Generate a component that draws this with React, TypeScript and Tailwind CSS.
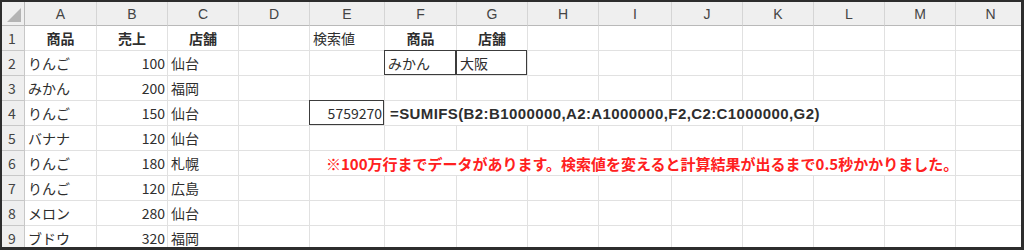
import React from 'react'
import clsx from 'clsx'

// column widths of the sheet, first entry is the row-number gutter
const colWidths = [23, 72, 71, 71, 71, 75, 72, 71, 71, 73, 71, 71, 71, 71, 70]
const letters = ['A', 'B', 'C', 'D', 'E', 'F', 'G', 'H', 'I', 'J', 'K', 'L', 'M', 'N']

type Cell = {
    text?: string
    align?: 'left' | 'right' | 'center'
    bold?: boolean
    span?: number
    boxed?: boolean
    red?: boolean
    pad?: string
    extra?: string
}

const data: Record<string, Cell> = {
    A1: { text: '商品', align: 'center', bold: true },
    B1: { text: '売上', align: 'center', bold: true },
    C1: { text: '店舗', align: 'center', bold: true },
    E1: { text: '検索値' },
    F1: { text: '商品', align: 'center', bold: true },
    G1: { text: '店舗', align: 'center', bold: true },
    F2: { text: 'みかん', boxed: true },
    G2: { text: '大阪', boxed: true },
    E4: { text: '5759270', align: 'right', boxed: true },
    F4: {
        text: '=SUMIFS(B2:B1000000,A2:A1000000,F2,C2:C1000000,G2)',
        bold: true,
        span: 7,
        pad: 'pl-[5px]',
        extra: "font-['Liberation_Sans',sans-serif] text-[15px] tracking-[0.4px]",
    },
    E6: {
        text: '※100万行までデータがあります。検索値を変えると計算結果が出るまで0.5秒かかりました。',
        bold: true,
        red: true,
        span: 9,
        pad: 'pl-[16px]',
        extra: 'text-[15px]',
    },
}

const rows: [string, string, string][] = [
    ['りんご', '100', '仙台'],
    ['みかん', '200', '福岡'],
    ['りんご', '150', '仙台'],
    ['バナナ', '120', '仙台'],
    ['りんご', '180', '札幌'],
    ['りんご', '120', '広島'],
    ['メロン', '280', '仙台'],
    ['ブドウ', '320', '福岡'],
]

rows.forEach(([name, sales, shop], i) => {
    const r = i + 2
    data[`A${r}`] = { text: name }
    data[`B${r}`] = { text: sales, align: 'right' }
    data[`C${r}`] = { text: shop }
})

function SheetRow({ row }: { row: number }) {
    const cells: React.ReactNode[] = []
    let c = 0
    while (c < letters.length) {
        const key = `${letters[c]}${row}`
        const cell = data[key] || {}
        const span = cell.span || 1
        cells.push(
            <div
                key={key}
                style={{ gridColumn: `span ${span}` }}
                className={clsx(
                    'relative flex items-center border-b border-r border-[#e1e1e1] whitespace-nowrap overflow-visible',
                    cell.align === 'right' && 'justify-end pr-[2px]',
                    cell.align === 'center' && 'justify-center',
                    (!cell.align || cell.align === 'left') && (cell.pad || 'pl-[3px]'),
                    cell.bold ? 'font-bold' : 'font-normal',
                    cell.red ? 'text-[#ff2020]' : 'text-[#2e2e2e]',
                    cell.extra
                )}
            >
                {cell.boxed && <div className="absolute -left-px -top-px right-0 bottom-0 border border-[#3c3c3c]" />}
                <span className="relative">{cell.text}</span>
            </div>
        )
        c += span
    }
    return (
        <>
            <div className="flex items-center justify-center border-b border-r border-[#c8c8c8] bg-[#efefef] text-[#444] text-[14px] pr-[2px]">
                {row}
            </div>
            {cells}
        </>
    )
}

export default function App() {
    return (
        <div
            className="w-[1024px] h-[250px] overflow-hidden bg-white border-t-2 border-l-2 border-r-[3px] border-b-[3px] border-[#2d2d2d]"
            style={{ fontFamily: '"Noto Sans CJK JP", "Liberation Sans", sans-serif' }}
        >
            <div
                className="grid text-[14px] leading-none"
                style={{
                    gridTemplateColumns: colWidths.map((w) => `${w}px`).join(' '),
                    gridTemplateRows: '24px repeat(9, 25px)',
                }}
            >
                {/* corner with select-all triangle */}
                <div className="relative bg-[#efefef] border-b border-r border-[#b9b9b9]">
                    <svg className="absolute right-[3px] bottom-[3px]" width="14" height="14" viewBox="0 0 14 14">
                        <polygon points="14,0 14,14 0,14" fill="#b4b4b4" />
                    </svg>
                </div>
                {letters.map((l) => (
                    <div
                        key={l}
                        className="flex items-center justify-center bg-[#efefef] border-b border-b-[#b9b9b9] border-r border-r-[#d5d5d5] text-[#444] text-[14px]"
                        style={{ fontFamily: '"Liberation Sans", sans-serif' }}
                    >
                        {l}
                    </div>
                ))}
                {[1, 2, 3, 4, 5, 6, 7, 8, 9].map((r) => (
                    <SheetRow key={r} row={r} />
                ))}
            </div>
        </div>
    )
}
